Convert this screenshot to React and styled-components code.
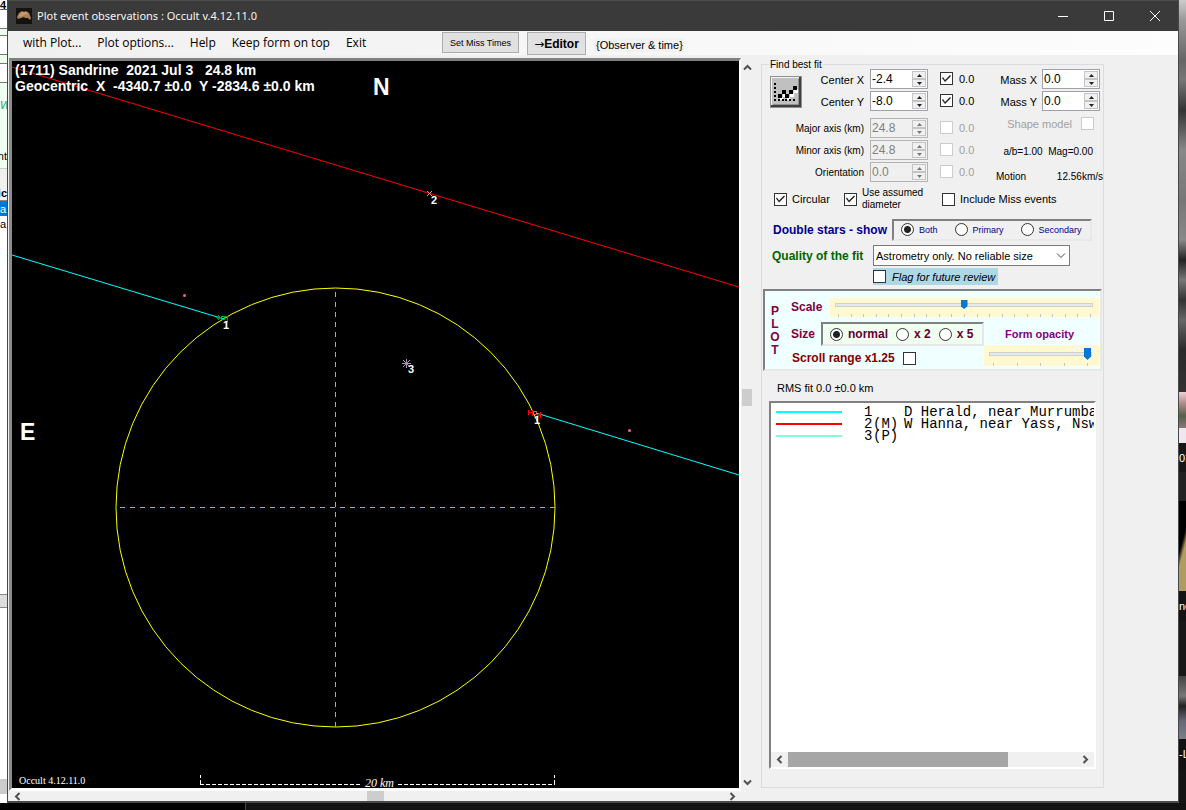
import React from "react";
import styled, { createGlobalStyle, css } from "styled-components";

const Global = createGlobalStyle`
  * { box-sizing: border-box; }
  body { margin: 0; background: #0f0f0f; color: #000; font: 11px/14px "Liberation Sans", Arial, sans-serif; }
  button, input, select { font: inherit; color: inherit; margin: 0; padding: 0; border-radius: 0; }
  p { margin: 0; }
`;

/* ---------- desktop behind the window ---------- */
const Desktop = styled.div`
  display: grid;
  grid-template-columns: 7px minmax(0, 1fr) 7px;
  grid-template-rows: 1fr 7px;
  min-height: 100vh;
`;
const Edge = styled.div`display: flex; flex-direction: column; overflow: hidden; background: ${(p) => p.$bg};`;
const Slice = styled.div`
  height: ${(p) => p.$h}px;
  flex: none;
  overflow: hidden;
  white-space: nowrap;
  display: flex;
  align-items: center;
  justify-content: ${(p) => (p.$end ? "flex-end" : "flex-start")};
  background: ${(p) => p.$bg};
  color: ${(p) => p.$fg || "#000"};
  border-bottom: ${(p) => (p.$line ? `1px solid ${p.$line}` : "0")};
  font-weight: ${(p) => (p.$bold ? 700 : 400)};
`;
const Taskbar = styled.div`
  grid-column: 1 / -1;
  background: linear-gradient(90deg, #000 245px, #444 245px, #444 246px, #111 246px);
`;

/* ---------- window frame ---------- */
const Window = styled.main`
  display: flex;
  flex-direction: column;
  background: #f0f0f0;
  border: 1px solid #484848;
  border-top: 0;
  border-bottom-width: 2px;
`;
const TitleBar = styled.header`
  height: 31px;
  display: flex;
  align-items: center;
  background: #3a3a3a;
  border-top: 1px solid #4c4c4c;
  padding-left: 8px;
  color: #f4f4f4;
`;
const Title = styled.h1`
  flex: 1;
  margin: 0 0 0 5px;
  font: 400 11px/16px "Noto Sans", "Open Sans", sans-serif;
`;
const CaptionButton = styled.button`
  width: 46px;
  height: 30px;
  display: grid;
  place-items: center;
  border: 0;
  background: none;
`;
const MenuBar = styled.nav`
  height: 24px;
  display: flex;
  align-items: flex-start;
  background: linear-gradient(90deg, #f0f0f0, #fdfdfd);
  padding-left: 15px;
`;
const Menus = styled.div`display: flex; gap: 16px; width: 419px;`;
const MenuItem = styled.button`
  border: 0;
  background: none;
  white-space: nowrap;
  font: 12px/24px "Open Sans", "Noto Sans", sans-serif;
`;
const ToolButton = styled.button`
  margin: 1px 8px 0 0;
  background: #e1e1e1;
  border: 1px solid #adadad;
  white-space: nowrap;
  ${(p) => p.$strong
    ? css`width: 59px; height: 23px; font-weight: 700; font-size: 12px;`
    : css`width: 77px; height: 21px; font-size: 9px;`}
`;
const Arrow = styled.span`font-family: "DejaVu Sans", sans-serif; font-weight: 400;`;
const MenuNote = styled.span`margin-top: 7px; padding: 0 2px; background: #f2f2f2; font-size: 11px;`;

const Body = styled.div`display: flex; flex: 1; padding: 3px 74px 0 1px;`;
const PlotColumn = styled.section`
  flex: 1;
  min-width: 0;
  display: grid;
  grid-template-columns: minmax(0, 1fr) 12px;
  grid-template-rows: auto 10px;
  align-content: start;
`;
const PlotFrame = styled.div`
  border: solid;
  border-width: 3px 2px 3px 3px;
  border-color: #808080 #fff #fff #8c8c8c;
  background: #000;
`;
const Canvas = styled.svg`
  display: block;
  width: 100%;
  text { fill: #fff; white-space: pre; font-family: "Liberation Sans", Arial, sans-serif; }
`;
const ScrollBar = styled.div`
  display: flex;
  flex-direction: ${(p) => (p.$vertical ? "column" : "row")};
  background: #f0f0f0;
`;
const ScrollButton = styled.button`
  flex: none;
  width: ${(p) => p.$w}px;
  height: ${(p) => p.$h}px;
  border: 0;
  background: none;
  display: grid;
  place-items: center;
`;
const Track = styled.div`
  flex: 1;
  display: flex;
  flex-direction: ${(p) => (p.$vertical ? "column" : "row")};
  align-items: stretch;
  &::before { content: ""; flex: ${(p) => p.$at} 0 0; }
  &::after { content: ""; flex: ${(p) => 100 - p.$at} 0 0; }
`;
const Thumb = styled.div`
  background: ${(p) => p.$bg || "#cdcdcd"};
  ${(p) => (p.$vertical ? "height" : "width")}: ${(p) => p.$size};
  ${(p) => p.$vertical && "margin: 0 1px;"}
`;

/* ---------- settings panel ---------- */
const Group = styled.fieldset`
  width: 343px;
  flex: none;
  margin: 1px 0 13px 8px;
  padding: 0 1px 18px;
  border: 1px solid #dcdcdc;
  display: flex;
  flex-direction: column;
  min-width: 0;
`;
const Legend = styled.legend`margin-left: 6px; padding: 2px 1px 0; line-height: 8px; font-size: 10px;`;
const Fit = styled.div`display: flex; padding: 0 2px 0 7px; height: 115px;`;
const FitButton = styled.button`
  width: 32px;
  height: 32px;
  margin-top: 7px;
  flex: none;
  border: 0;
  background: #c0c0c0;
  svg { display: block; }
`;
const FitGrid = styled.div`
  display: grid;
  grid-template-columns: 62px 58px auto;
  grid-template-rows: 20px 25px 20px 20px 20px;
  column-gap: 6px;
  row-gap: 2px;
  > * { align-self: start; }
`;
const FitLabel = styled.label`
  justify-self: end;
  white-space: nowrap;
  line-height: 20px;
  padding-top: 1px;
  font-size: ${(p) => (p.$small ? 10 : 11)}px;
`;
const Spin = styled.span`
  display: flex;
  width: 58px;
  height: 20px;
  padding: 1px;
  border: 1px solid ${(p) => (p.$off ? "#b4b4b4" : "#a0a0a8")};
  background: ${(p) => (p.$off ? "#f0f0f0" : "#fff")};
`;
const SpinInput = styled.input`
  flex: 1;
  min-width: 0;
  border: 0;
  background: none;
  line-height: 16px;
  font-size: 12px;
  &:disabled { color: #808080; }
`;
const SpinButtons = styled.span`width: 14px; display: flex; flex-direction: column;`;
const SpinButton = styled.button`
  flex: 1;
  border: 1px solid #c4c4c4;
  background: #f0f0f0;
  display: grid;
  place-items: center;
`;
const Box = styled.input.attrs({ type: "checkbox" })`
  appearance: none;
  flex: none;
  width: 13px;
  height: 13px;
  border: 1px solid #333;
  background: #fff;
  display: block;
  &:disabled { border-color: #ccc; }
  &:checked::after {
    content: "";
    display: block;
    width: 11px;
    height: 11px;
    background: #222;
    clip-path: polygon(1px 5px, 2px 4px, 4px 7px, 9px 2px, 10px 3px, 4px 9px);
  }
`;
const BoxCell = styled.label`
  display: flex;
  width: 60px;
  gap: 6px;
  padding: 3px 0 0 6px;
  color: ${(p) => (p.$off ? "#a0a0a0" : "#000")};
`;
const Mass = styled.div`flex: 1; display: flex; flex-direction: column; align-items: flex-end;`;
const MassRow = styled.div`display: flex; gap: 5px; height: 22px; line-height: 22px; white-space: nowrap;`;
const ShapeRow = styled.label`display: flex; gap: 9px; margin-top: 4px; padding-right: 6px; color: #a0a0a0; line-height: 14px;`;
const Ratio = styled.p`margin-top: 14px; padding-right: 7px; font-size: 10px; white-space: nowrap;`;
const Motion = styled.p`
  display: flex;
  justify-content: space-between;
  width: 107px;
  margin: 11px -3px 0 0;
  font-size: 10px;
  white-space: nowrap;
`;
const Checks = styled.div`
  display: grid;
  grid-template-columns: 70px 98px auto;
  align-items: center;
  height: 30px;
  padding-left: 11px;
`;
const CheckLabel = styled.label`
  display: flex;
  align-items: center;
  gap: 5px;
  white-space: nowrap;
  font-size: ${(p) => (p.$small ? 10 : 11)}px;
  line-height: 12px;
`;
const Row = styled.div`display: flex; align-items: center; height: ${(p) => p.$h}px; padding-left: ${(p) => p.$pad || 0}px;`;
const Heading = styled.span`
  font-weight: 700;
  font-size: 12px;
  color: ${(p) => p.$color};
  width: ${(p) => p.$w}px;
  white-space: nowrap;
`;
const sunken = css`
  border: solid;
  border-width: 2px;
  border-color: #808080 #e8e8e8 #e8e8e8 #808080;
`;
const Radios = styled.div`
  ${sunken}
  display: flex;
  align-items: center;
  height: ${(p) => p.$h}px;
  width: ${(p) => p.$w}px;
  background: ${(p) => p.$bg};
  padding-left: 7px;
  gap: ${(p) => p.$gap}px;
`;
const RadioLabel = styled.label`
  display: flex;
  align-items: center;
  gap: 5px;
  white-space: nowrap;
  color: ${(p) => p.$color};
  font-weight: ${(p) => (p.$bold ? 700 : 400)};
  font-size: ${(p) => (p.$bold ? 12 : 9)}px;
`;
const Radio = styled.input.attrs({ type: "radio" })`
  appearance: none;
  width: 13px;
  height: 13px;
  border: 1px solid #333;
  border-radius: 50%;
  background: #fff;
  &:checked { background: radial-gradient(circle, #222 3px, #fff 4px); }
`;
const SelectWrap = styled.span`
  display: grid;
  align-items: center;
  width: 197px;
  height: 21px;
  border: 1px solid #7a7a7a;
  background: #fff;
  > * { grid-area: 1 / 1; }
  svg { justify-self: end; margin-right: 3px; pointer-events: none; }
`;
const Select = styled.select`
  appearance: none;
  width: 100%;
  height: 19px;
  border: 0;
  background: none;
  padding-left: 2px;
`;
const Flag = styled.label`
  display: flex;
  align-items: center;
  gap: 6px;
  width: 125px;
  height: 17px;
  margin: 2px 0 0 110px;
  background: #add8e6;
  font-style: italic;
  white-space: nowrap;
`;
const PlotPanel = styled.section`
  ${sunken}
  display: grid;
  grid-template-columns: 17px minmax(0, 1fr);
  height: 82px;
  margin-top: 4px;
  background: #f0ffff;
`;
const Side = styled.h2`
  margin: 14px 0 0 5px;
  width: 10px;
  text-align: center;
  color: #800040;
  font-size: 12px;
  line-height: 13px;
  word-break: break-all;
`;
const PlotRows = styled.div`padding: 6px 0 0 9px;`;
const Split = styled.div`display: grid; grid-template-columns: 1fr 116px;`;
const OpacityLabel = styled.label`display: block; height: 28px; padding: 11px 0 0 21px; line-height: 12px; color: #800080; font-weight: 700;`;
const Slider = styled.div`
  display: flex;
  flex-direction: column;
  background: #fff8d0;
  padding: 3px ${(p) => p.$pad}px 0 5px;
  height: ${(p) => p.$h}px;
  width: ${(p) => p.$w}px;
  svg { display: block; margin-top: ${(p) => p.$tickGap}px; width: 100%; }
`;
const Range = styled.input.attrs({ type: "range" })`
  appearance: none;
  display: block;
  width: 100%;
  height: ${(p) => p.$thumb}px;
  background: none;
  &::-webkit-slider-runnable-track {
    height: 4px;
    background: #e7eaea;
    border: 1px solid #d0d0d0;
  }
  &::-webkit-slider-thumb {
    appearance: none;
    width: 7px;
    height: ${(p) => p.$thumb}px;
    margin-top: ${(p) => (p.$thumb > 10 ? -5 : -4)}px;
    background: #0078d7;
    clip-path: polygon(0 0, 100% 0, 100% 70%, 50% 100%, 0 70%);
  }
`;
const Rms = styled.p`margin: 10px 0 6px 14px;`;
const ListBox = styled.div`
  ${sunken}
  border-right-color: #fff;
  border-bottom-color: #fff;
  flex: 1;
  display: flex;
  flex-direction: column;
  margin: 0 6px 0 6px;
  background: #fff;
  overflow: hidden;
`;
const Entries = styled.ul`flex: 1; margin: 0; padding: 3px 0 0 5px; list-style: none;`;
const Entry = styled.li`
  display: grid;
  grid-template-columns: 88px 9px 31px auto;
  height: 12px;
  font: 14px/12px "Liberation Mono", "Courier New", monospace;
  white-space: nowrap;
`;
const Swatch = styled.i`align-self: center; width: 66px; height: 2px; background: ${(p) => p.$c};`;

const Chevron = ({ dir, color = "#505050" }) => {
  const turn = { up: 0, right: 90, down: 180, left: 270 }[dir];
  return (
    <svg width="9" height="9" viewBox="0 0 9 9" aria-hidden="true">
      <path d="M1 6.5 4.5 3 8 6.5" fill="none" stroke={color} strokeWidth="2" transform={`rotate(${turn} 4.5 4.5)`} />
    </svg>
  );
};

const Spinner = ({ id, value, off }) => (
  <Spin $off={off}>
    <SpinInput id={id} type="text" defaultValue={value} disabled={off} />
    <SpinButtons>
      {["M0 3h5L2.500 0z", "M0 0h5L2.500 3z"].map((d, i) => (
        <SpinButton key={d} type="button" disabled={off} aria-label={i ? "Decrease" : "Increase"}>
          <svg width="5" height="3" viewBox="0 0 5 3"><path d={d} fill={off ? "#777" : "#222"} /></svg>
        </SpinButton>
      ))}
    </SpinButtons>
  </Spin>
);

const Ticks = ({ width, count, from, to }) => (
  <svg height="3" viewBox={`0 0 ${width} 3`} preserveAspectRatio="none" aria-hidden="true">
    {Array.from({ length: count }, (_, i) => (
      <rect key={i} x={Math.round(from + (i * (to - from)) / (count - 1))} width="1" height="3" fill="#c4c4c4" />
    ))}
  </svg>
);

const fitRows = [
  ["Center X", "-2.4", true, false],
  ["Center Y", "-8.0", true, false],
  ["Major axis (km)", "24.8", false, true],
  ["Minor axis (km)", "24.8", false, true],
  ["Orientation", "0.0", false, true],
];
const observers = [
  ["#00ffff", "1", "", "D Herald, near Murrumba"],
  ["#ff0000", "2", "(M)", "W Hanna, near Yass, Nsw"],
  ["#7fffd4", "3", "(P)", ""],
];

const FitIcon = () => (
  <svg width="32" height="32" viewBox="0 0 32 32" shapeRendering="crispEdges" aria-hidden="true">
    <path d="M0 0h32v32H0z" fill="#909090" />
    <path d="M1 1h29v29H1z" fill="#f4f4f4" />
    <path d="M2 2h28v28H2z" fill="#c0c0c0" />
    <path d="M1 29h28V1h2v30H1z" fill="#404040" />
    <path d="M3 28h25V3h1v26H3z" fill="#909090" />
    <path d="M10 21h3v3h-3zM13 17h3v4h-3zM17 21h3v3h-3zM20 17h4v4h-4zM24 13h4v4h-4z" fill="#fff" />
    <path d="M8 18h4v4H8zM12 14h4v4h-4zM15 18h4v4h-4zM19 14h4v4h-4zM23 10h4v4h-4z" />
    <path d="M4 7h2v2H4zM4 11h2v2H4zM4 15h2v2H4zM4 19h2v2H4zM4 23h2v2H4zM8 23h2v2H8zM12 23h2v2h-2zM15 23h2v2h-2zM19 23h2v2h-2zM23 23h2v2h-2z" />
  </svg>
);

const Chart = () => (
  <Canvas viewBox="0 0 727 727" role="img" aria-label="Occultation chords">
    <g fill="none" strokeWidth="1">
      <path d="M0 6 727 226" stroke="#f00" />
      <path d="M0 194 212 258M524 352 727 414" stroke="#0ff" />
      <circle cx="323.500" cy="446.500" r="219.500" stroke="#ff0" />
      <path d="M323.500 231V666M108 446.500H543" stroke="#f0a020" strokeDasharray="5 5" shapeRendering="crispEdges" />
      <path d="M415 130l5 5m0-5-5 5" stroke="#d0a0a0" />
      <path d="M206.500 254v5M204 256.500h5M205 255l3 3m0-3-3 3M213 255.500h2.500v6" stroke="#109020" />
      <path d="M209.500 255.500h3v3h-3z" stroke="#00d020" />
      <path d="M516.500 349v5M520.500 349v6M516.500 351.500h4M525.500 353v5M528.500 351v6M525.500 355l3-1" stroke="#f00" />
      <path d="M521.500 350.500h3v3h-3z" stroke="#ff6040" />
      <path d="M394.500 298v9M390 302.500h9M391 299l7 7m0-7-7 7" stroke="#9c9cb8" />
      <path d="M188.500 723V714M542.500 723V714" stroke="#fff" strokeDasharray="4 2" shapeRendering="crispEdges" />
      <path d="M188 723.500H350M386 723.500H543" stroke="#fff" strokeDasharray="4 2" shapeRendering="crispEdges" />
    </g>
    <g fill="#f060a0">
      <circle cx="172.500" cy="234.500" r="1.500" />
      <circle cx="617.500" cy="369.500" r="1.500" />
      <circle cx="394.500" cy="302.500" r="1.500" />
    </g>
    <g fontSize="14" fontWeight="700">
      <text x="3" y="14">{"(1711) Sandrine  2021 Jul 3   24.8 km"}</text>
      <text x="3" y="30">{"Geocentric  X  -4340.7 ±0.0  Y -2834.6 ±0.0 km"}</text>
    </g>
    <g fontSize="23" fontWeight="700">
      <text x="361" y="34">N</text>
      <text x="8" y="379">E</text>
    </g>
    <g fontSize="11" fontWeight="700">
      <text x="211" y="268">1</text>
      <text x="522" y="363">1</text>
      <text x="419" y="143">2</text>
      <text x="396" y="312">3</text>
    </g>
    <text x="7" y="723" fontSize="10" style={{ fontFamily: '"Liberation Serif", serif' }}>Occult 4.12.11.0</text>
    <text x="353" y="726" fontSize="12" fontStyle="italic" style={{ fontFamily: '"Liberation Serif", serif' }}>20 km</text>
  </Canvas>
);

export default function App() {
  return (
    <>
      <Global />
      <Desktop>
        <Edge $bg="#fff" aria-hidden="true">
          <Slice $h={10} $bg="#fff" $line="#666" $bold>4</Slice>
          <Slice $h={19} $bg="#fff" $line="#777" />
          <Slice $h={7} $bg="#efe" $line="#777" />
          <Slice $h={19} $bg="#fff" $line="#777" />
          <Slice $h={9} $bg="#efe" $line="#777" />
          <Slice $h={19} $bg="#fff" $line="#777" />
          <Slice $h={44} $bg="#efffef" $fg="#389a72"><i>Wo</i></Slice>
          <Slice $h={17} $bg="#efffef" />
          <Slice $h={25} $bg="#efffef" $line="#ccc" $end>nt</Slice>
          <Slice $h={16} $bg="#f0f0f0" />
          <Slice $h={16} $bg="#f0f0f0" $line="#888" $end $bold>tic</Slice>
          <Slice $h={15} $bg="#0078d7" $fg="#fff">a.</Slice>
          <Slice $h={16} $bg="#fff">a.</Slice>
          <Slice $h={363} $bg="#fff" $line="#888" />
          <Slice $h={13} $bg="#ddd" $line="#888" />
          <Slice $h={171} $bg="#fff" />
          <Slice $h={15} $bg="#ccc" />
        </Edge>
        <Window>
          <TitleBar>
            <svg width="16" height="16" viewBox="0 0 16 16" aria-hidden="true">
              <path d="M0 0h16v16H0z" fill="#15120e" />
              <path d="M1 9 3 5 6 3 8 4 10 3 13 5 15 10 14 12 12 10 9 10 8 9 5 10 2 11z" fill="#a88058" />
              <path d="M3 7 6 4 10 4 12 6 8 7 4 9z" fill="#c59a6c" />
            </svg>
            <Title>Plot event observations : Occult v.4.12.11.0</Title>
            <CaptionButton type="button" aria-label="Minimize">
              <svg width="10" height="10"><path d="M0 5.500H10" stroke="#fff" /></svg>
            </CaptionButton>
            <CaptionButton type="button" aria-label="Maximize">
              <svg width="10" height="10"><path d="M.5.5h9v9h-9z" fill="none" stroke="#fff" /></svg>
            </CaptionButton>
            <CaptionButton type="button" aria-label="Close">
              <svg width="10" height="10"><path d="M0 0 10 10M10 0 0 10" stroke="#fff" /></svg>
            </CaptionButton>
          </TitleBar>
          <MenuBar>
            <Menus>
              {["with Plot...", "Plot options...", "Help", "Keep form on top", "Exit"].map((m) => (
                <MenuItem key={m} type="button">{m}</MenuItem>
              ))}
            </Menus>
            <ToolButton type="button">Set Miss Times</ToolButton>
            <ToolButton type="button" $strong><Arrow>→</Arrow>Editor</ToolButton>
            <MenuNote>{"{Observer & time}"}</MenuNote>
          </MenuBar>
          <Body>
            <PlotColumn>
              <PlotFrame><Chart /></PlotFrame>
              <ScrollBar $vertical>
                <ScrollButton type="button" aria-label="Scroll up" $w={12} $h={18}><Chevron dir="up" /></ScrollButton>
                <Track $vertical $at={46}><Thumb $vertical $size="17px" /></Track>
                <ScrollButton type="button" aria-label="Scroll down" $w={12} $h={18}><Chevron dir="down" /></ScrollButton>
              </ScrollBar>
              <ScrollBar>
                <ScrollButton type="button" aria-label="Scroll left" $w={17} $h={10}><Chevron dir="left" /></ScrollButton>
                <Track $at={50}><Thumb $size="17px" /></Track>
                <ScrollButton type="button" aria-label="Scroll right" $w={17} $h={10}><Chevron dir="right" /></ScrollButton>
              </ScrollBar>
            </PlotColumn>
            <Group>
              <Legend>Find best fit</Legend>
              <Fit>
                <FitButton type="button" aria-label="Find best fit"><FitIcon /></FitButton>
                <FitGrid>
                  {fitRows.map(([label, value, checked, off], i) => (
                    <React.Fragment key={label}>
                      <FitLabel htmlFor={`fit${i}`} $small={i > 1}>{label}</FitLabel>
                      <Spinner id={`fit${i}`} value={value} off={off} />
                      <BoxCell $off={off}>
                        <Box defaultChecked={checked} disabled={off} />0.0
                      </BoxCell>
                    </React.Fragment>
                  ))}
                </FitGrid>
                <Mass>
                  <MassRow><label htmlFor="mx">Mass X</label><Spinner id="mx" value="0.0" /></MassRow>
                  <MassRow><label htmlFor="my">Mass Y</label><Spinner id="my" value="0.0" /></MassRow>
                  <ShapeRow>Shape model<Box disabled /></ShapeRow>
                  <Ratio>a/b=1.00&nbsp; Mag=0.00</Ratio>
                  <Motion><span>Motion</span><span>12.56km/s</span></Motion>
                </Mass>
              </Fit>
              <Checks>
                <CheckLabel><Box defaultChecked />Circular</CheckLabel>
                <CheckLabel $small><Box defaultChecked /><span>Use assumed<br />diameter</span></CheckLabel>
                <CheckLabel><Box />Include Miss events</CheckLabel>
              </Checks>
              <Row $h={31} $pad={10}>
                <Heading $color="#00008b" $w={119}>Double stars - show</Heading>
                <Radios $h={22} $w={200} $bg="#f0f0f0" $gap={17}>
                  {["Both", "Primary", "Secondary"].map((t, i) => (
                    <RadioLabel key={t} $color="#00008b"><Radio name="stars" defaultChecked={!i} />{t}</RadioLabel>
                  ))}
                </Radios>
              </Row>
              <Row $h={21} $pad={9}>
                <Heading as="label" htmlFor="quality" $color="#006400" $w={101}>Quality of the fit</Heading>
                <SelectWrap>
                  <Select id="quality"><option>Astrometry only. No reliable size</option></Select>
                  <svg width="10" height="6"><path d="M1 .5 5 4.500 9 .5" fill="none" stroke="#444" /></svg>
                </SelectWrap>
              </Row>
              <Flag><Box />Flag for future review</Flag>
              <PlotPanel>
                <Side>PLOT</Side>
                <PlotRows>
                  <Row $h={20}>
                    <Heading as="label" htmlFor="scale" $color="#800040" $w={39}>Scale</Heading>
                    <Slider $pad={6} $h={19} $w={269} $tickGap={4}>
                      <Range id="scale" defaultValue="50" $thumb={9} />
                      <Ticks width={258} count={21} from={3} to={255} />
                    </Slider>
                  </Row>
                  <Split>
                    <div>
                      <Row $h={34}>
                        <Heading $color="#800040" $w={30}>Size</Heading>
                        <Radios $h={24} $w={163} $bg="#f0fff0" $gap={8}>
                          {["normal", "x 2", "x 5"].map((t, i) => (
                            <RadioLabel key={t} $bold $color="#600030"><Radio name="size" defaultChecked={!i} />{t}</RadioLabel>
                          ))}
                        </Radios>
                      </Row>
                      <Row as="label" $h={14} $pad={1}>
                        <Heading $color="#800000" $w={111}>Scroll range x1.25</Heading><Box />
                      </Row>
                    </div>
                    <div>
                      <OpacityLabel htmlFor="opacity">Form opacity</OpacityLabel>
                      <Slider $pad={7} $h={21} $w={115} $tickGap={3}>
                        <Range id="opacity" defaultValue="100" $thumb={12} />
                        <Ticks width={103} count={5} from={4} to={98} />
                      </Slider>
                    </div>
                  </Split>
                </PlotRows>
              </PlotPanel>
              <Rms>RMS fit 0.0 ±0.0 km</Rms>
              <ListBox>
                <Entries>
                  {observers.map(([c, n, tag, name]) => (
                    <Entry key={n}><Swatch $c={c} /><span>{n}</span><span>{tag}</span><span>{name}</span></Entry>
                  ))}
                </Entries>
                <ScrollBar>
                  <ScrollButton type="button" aria-label="Scroll list left" $w={17} $h={15}><Chevron dir="left" /></ScrollButton>
                  <Track $at={0}><Thumb $bg="#a6a6a6" $size="76%" /></Track>
                  <ScrollButton type="button" aria-label="Scroll list right" $w={17} $h={15}><Chevron dir="right" /></ScrollButton>
                </ScrollBar>
              </ListBox>
            </Group>
          </Body>
        </Window>
        <Edge $bg="#141414" aria-hidden="true">
          <Slice $h={392} $bg="linear-gradient(#ccc, #999 20px, #666 60px, #777 80px, #333 110px, #888 150px, #777 200px, #888 240px, #222 260px, #777 280px, #333 300px, #666 320px, #2a2a2a 350px, #333)" />
          <Slice $h={36} $bg="linear-gradient(#f0d0d4, #a88 12px, #566048 24px, #8a7878)" />
          <Slice $h={15} $bg="#eee8ee" />
          <Slice $h={29} $bg="#181818" $fg="#fff">01</Slice>
          <Slice $h={29} $bg="#222" />
          <Slice $h={90} $bg="linear-gradient(105deg, #000 45%, #b09c60 58%)" />
          <Slice $h={30} $bg="#141414" $fg="#fff">ne</Slice>
          <Slice $h={55} $bg="#181818" />
          <Slice $h={63} $bg="linear-gradient(#444, #777 20px, #222 30px, #667 45px, #788085)" />
          <Slice $h={30} $bg="#111" $fg="#fff">-L</Slice>
        </Edge>
        <Taskbar />
      </Desktop>
    </>
  );
}
